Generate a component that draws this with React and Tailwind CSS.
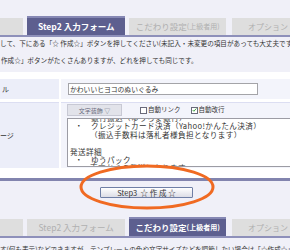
import React from "react";

const jp = { fontFamily: '"Noto Sans CJK JP", "Noto Sans", sans-serif' };

function Tab({ active, className = "", children }) {
  return (
    <div
      className={`flex items-center justify-center whitespace-nowrap ${
        active
          ? "h-[19px] bg-[#5d5f8f] border-t-2 border-[#8688b4] text-white font-bold"
          : "h-[17px] bg-[#dedede] text-[#b0b0b0]"
      } ${className}`}
    >
      {children}
    </div>
  );
}

function TabRow({ step }) {
  const second = step === 2;
  return (
    <div className="flex items-end h-[19px]">
      <Tab className="w-[24px]" />
      <Tab active={second} className="w-[103px] ml-[4px] text-[8.5px]">
        Step2 入力フォーム
      </Tab>
      <Tab active={!second} className="w-[101px] ml-[4px] text-[8.5px]">
        こだわり設定<span className="text-[7px]">(上級者用)</span>
      </Tab>
      <Tab className="w-[60px] ml-[6px] text-[8px] justify-start pl-[16px]">
        オプション
      </Tab>
    </div>
  );
}

function Checkbox({ checked }) {
  return (
    <span className="w-[7px] h-[7px] border border-[#6a6a7a] bg-white flex items-center justify-center">
      {checked && (
        <svg viewBox="0 0 8 8" className="w-[6px] h-[6px]">
          <path d="M1 4 L3 6 L7 1.5" fill="none" stroke="#2a9a2a" strokeWidth="1.4" />
        </svg>
      )}
    </span>
  );
}

export default function App() {
  return (
    <div
      className="relative w-[290px] h-[250px] overflow-hidden bg-[#f0f0f8] text-[#333]"
      style={jp}
    >
      {/* top tabs */}
      <div className="h-[16px]" />
      <TabRow step={2} />
      <div className="h-[2px] bg-[#8e90ba]" />

      {/* instructions */}
      <div className="h-[35px] text-[6.6px] whitespace-nowrap overflow-hidden">
        <div className="h-[12px] leading-[12px]">
          して、下にある「☆ 作成☆」ボタンを押してください(未記入・未変更の項目があっても大丈夫です)。
        </div>
        <div className="h-[12px] leading-[12px] mt-[5px] pl-[1px]">
          作成☆」ボタンがたくさんありますが、どれを押しても同じです。
        </div>
      </div>

      {/* form table */}
      <div className="bg-white pt-[7px] pb-[10px]">
        <div className="flex h-[20px]">
          <div className="w-[59px] bg-[#eceef9] flex items-center pl-[2px] text-[7px]">ル</div>
          <div className="flex-1 ml-[2px] bg-[#f3f4fb] pl-[7px] pt-[4px]">
            <div className="w-[190px] h-[12px] bg-white border border-[#a4a4a8] text-[6.8px] leading-[10px] pl-[1px] whitespace-nowrap">
              かわいいヒヨコのぬいぐるみ
            </div>
          </div>
        </div>
        <div className="flex h-[66px] mt-[3px]">
          <div className="w-[59px] bg-[#eceef9] border-t border-[#dcdef2] flex items-center text-[7px]">ージ</div>
          <div className="flex-1 ml-[2px] bg-[#f3f4fb] border-t border-[#dcdef2] pl-[6px] pt-[1px] overflow-hidden">
            <div className="flex items-center h-[12px] whitespace-nowrap">
              <div className="w-[55px] h-[12px] bg-[#e2e3ea] border border-[#c8c9d4] text-[6px] text-[#6a6c80] flex items-center justify-center">
                文字装飾 ▽
              </div>
              <div className="flex items-center gap-[1px] ml-[18px] text-[6.5px]">
                <Checkbox />
                <span>自動リンク</span>
              </div>
              <div className="flex items-center gap-[1px] ml-[10px] text-[6.5px]">
                <Checkbox checked />
                <span>自動改行</span>
              </div>
            </div>
            <div className="mt-[2px] w-[260px] h-[49px] bg-white border border-[#9c9ca4] overflow-hidden text-[7.6px] leading-[8.4px] whitespace-nowrap tracking-[0.4px]">
              <div className="-mt-[5px] pl-[2px]">
                <div className="pl-[5px]">・　銀行振込（ゆうちょ銀行）</div>
                <div className="pl-[5px]">・　クレジットカード決済（Yahoo!かんたん決済）</div>
                <div className="pl-[20px]">（振込手数料は落札者様負担となります）</div>
                <div className="h-[8.4px]" />
                <div>発送詳細</div>
                <div className="pl-[5px]">・　ゆうパック</div>
                <div className="pl-[20px]">東京からの発送になります</div>
              </div>
            </div>
          </div>
        </div>
      </div>

      {/* step3 button area */}
      <div className="h-[3px] bg-[#8284ae]" />
      <div className="h-[36px] pt-[6px] pl-[100px]">
        <button className="w-[93px] h-[11px] border border-[#6f7fa6] rounded-[1px] bg-gradient-to-b from-white to-[#dcdde6] text-[7.5px] leading-[9px] text-[#333] flex items-center justify-center whitespace-pre">
          {"Step3  ☆ 作 成 ☆"}
        </button>
      </div>

      {/* bottom tabs */}
      <TabRow step={3} />
      <div className="h-[2px] bg-[#8e90ba]" />
      <div className="pt-[5px] text-[6.6px] leading-[12px] whitespace-nowrap">
        す(何も表示)などできますが、テンプレートの色や文字サイズなどを調節したい場合は「☆作成☆」
      </div>

      {/* orange highlight */}
      <svg className="absolute left-0 top-0 pointer-events-none" width="290" height="250">
        <ellipse cx="147" cy="187" rx="66" ry="21" fill="none" stroke="#f06a22" strokeWidth="3" />
      </svg>
    </div>
  );
}
